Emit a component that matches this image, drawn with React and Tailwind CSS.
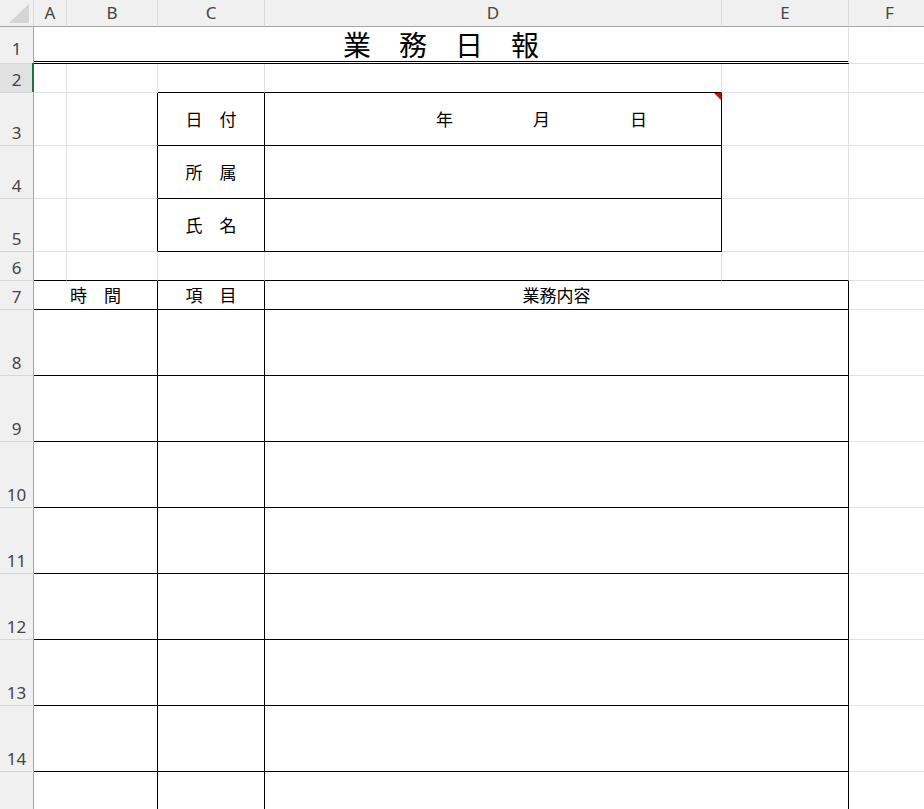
import React from 'react';

// cell edge styles: g = light gridline, b = black ruled border
const gR = 'border-r border-r-[#e1e1e1]';
const bR = 'border-r border-r-black';
const gB = 'border-b border-b-[#e1e1e1]';
const bB = 'border-b border-b-black';

const COLS = ['A', 'B', 'C', 'D', 'E', 'F'];
const INFO = ['所　属', '氏　名'];

function ColHead({ children }) {
  return (
    <div className="flex items-center justify-center bg-[#f0f0f0] border-b border-b-[#a6a6a6] border-r border-r-[#dadada] text-[17px] text-[#444] font-['Noto_Sans','DejaVu_Sans',sans-serif]">
      {children}
    </div>
  );
}

function RowHead({ n, active, low }) {
  return (
    <div
      className={`flex items-end justify-center border-r border-r-[#a6a6a6] border-b border-b-[#d6d6d6] text-[17px] leading-[20px] text-[#444] font-['Noto_Sans','DejaVu_Sans',sans-serif] ${
        active ? 'bg-[#e1e1e1]' : 'bg-[#f0f0f0]'
      } ${low ? 'pb-[4px]' : 'pb-[2px]'}`}
    >
      {n}
    </div>
  );
}

function Cell({ className = '', children }) {
  return <div className={`flex items-center justify-center min-w-0 ${className}`}>{children}</div>;
}

export default function App() {
  return (
    <div className="w-[924px] h-[809px] overflow-hidden bg-white text-black font-['Noto_Sans_CJK_JP','Noto_Sans',sans-serif]">
      <div className="grid grid-cols-[34px_33px_91px_107px_457px_127px_82px] grid-rows-[27px_37px_29px_53px_53px_53px_29px_29px_repeat(8,66px)]">
        {/* column headers */}
        <div className="relative bg-[#f0f0f0] border-b border-b-[#a6a6a6] border-r border-r-[#dadada]">
          <svg className="absolute right-[4px] bottom-[3px]" width="20" height="19" viewBox="0 0 20 19">
            <polygon points="20,0 20,19 0,19" fill="#d4d4d4" />
          </svg>
        </div>
        {COLS.map((c) => (
          <ColHead key={c}>{c}</ColHead>
        ))}

        {/* row 1 : title */}
        <RowHead n={1} low />
        <Cell className={`col-span-5 ${gR} border-b-[3px] border-double border-b-black text-[28px] leading-none`}>
          業　務　日　報
        </Cell>
        <Cell className={gB} />

        {/* row 2 */}
        <RowHead n={2} active />
        <div className={`relative ${gR} ${gB}`}>
          <div className="absolute left-[-2px] top-[-1px] bottom-0 w-[2px] bg-[#1e7145]" />
        </div>
        <Cell className={`${gR} ${gB}`} />
        <Cell className={`${gR} ${bB}`} />
        <Cell className={`${gR} ${bB}`} />
        <Cell className={`${gR} ${gB}`} />
        <Cell className={gB} />

        {/* row 3 : date */}
        <RowHead n={3} />
        <Cell className={`${gR} ${gB}`} />
        <Cell className={`${bR} ${gB}`} />
        <Cell className={`${bR} ${bB} text-[17px]`}>日　付</Cell>
        <div className={`relative flex items-center pl-[171px] gap-[80px] ${bR} ${bB} text-[17px]`}>
          <span>年</span>
          <span>月</span>
          <span>日</span>
          <svg className="absolute top-0 right-0" width="7" height="7" viewBox="0 0 7 7">
            <polygon points="0,0 7,0 7,7" fill="#e00000" />
          </svg>
        </div>
        <Cell className={`${gR} ${gB}`} />
        <Cell className={gB} />

        {/* rows 4-5 */}
        {INFO.map((label, i) => (
          <React.Fragment key={label}>
            <RowHead n={4 + i} />
            <Cell className={`${gR} ${gB}`} />
            <Cell className={`${bR} ${gB}`} />
            <Cell className={`${bR} ${bB} text-[17px]`}>{label}</Cell>
            <Cell className={`${bR} ${bB}`} />
            <Cell className={`${gR} ${gB}`} />
            <Cell className={gB} />
          </React.Fragment>
        ))}

        {/* row 6 */}
        <RowHead n={6} />
        <Cell className={`${gR} ${bB}`} />
        <Cell className={`${gR} ${bB}`} />
        <Cell className={`${gR} ${bB}`} />
        <Cell className={`${gR} ${bB}`} />
        <Cell className={`${gR} ${bB}`} />
        <Cell className={gB} />

        {/* row 7 : table head */}
        <RowHead n={7} />
        <Cell className={`col-span-2 ${bR} ${bB} text-[17px]`}>時　間</Cell>
        <Cell className={`${bR} ${bB} text-[17px]`}>項　目</Cell>
        <Cell className={`col-span-2 ${bR} ${bB} text-[17px]`}>業務内容</Cell>
        <Cell className={gB} />

        {/* rows 8-15 (15 runs past the window, its number is out of view) */}
        {[8, 9, 10, 11, 12, 13, 14, 15].map((n) => (
          <React.Fragment key={n}>
            <RowHead n={n < 15 ? n : ''} />
            <Cell className={`col-span-2 ${bR} ${bB}`} />
            <Cell className={`${bR} ${bB}`} />
            <Cell className={`col-span-2 ${bR} ${bB}`} />
            <Cell className={gB} />
          </React.Fragment>
        ))}
      </div>
    </div>
  );
}
